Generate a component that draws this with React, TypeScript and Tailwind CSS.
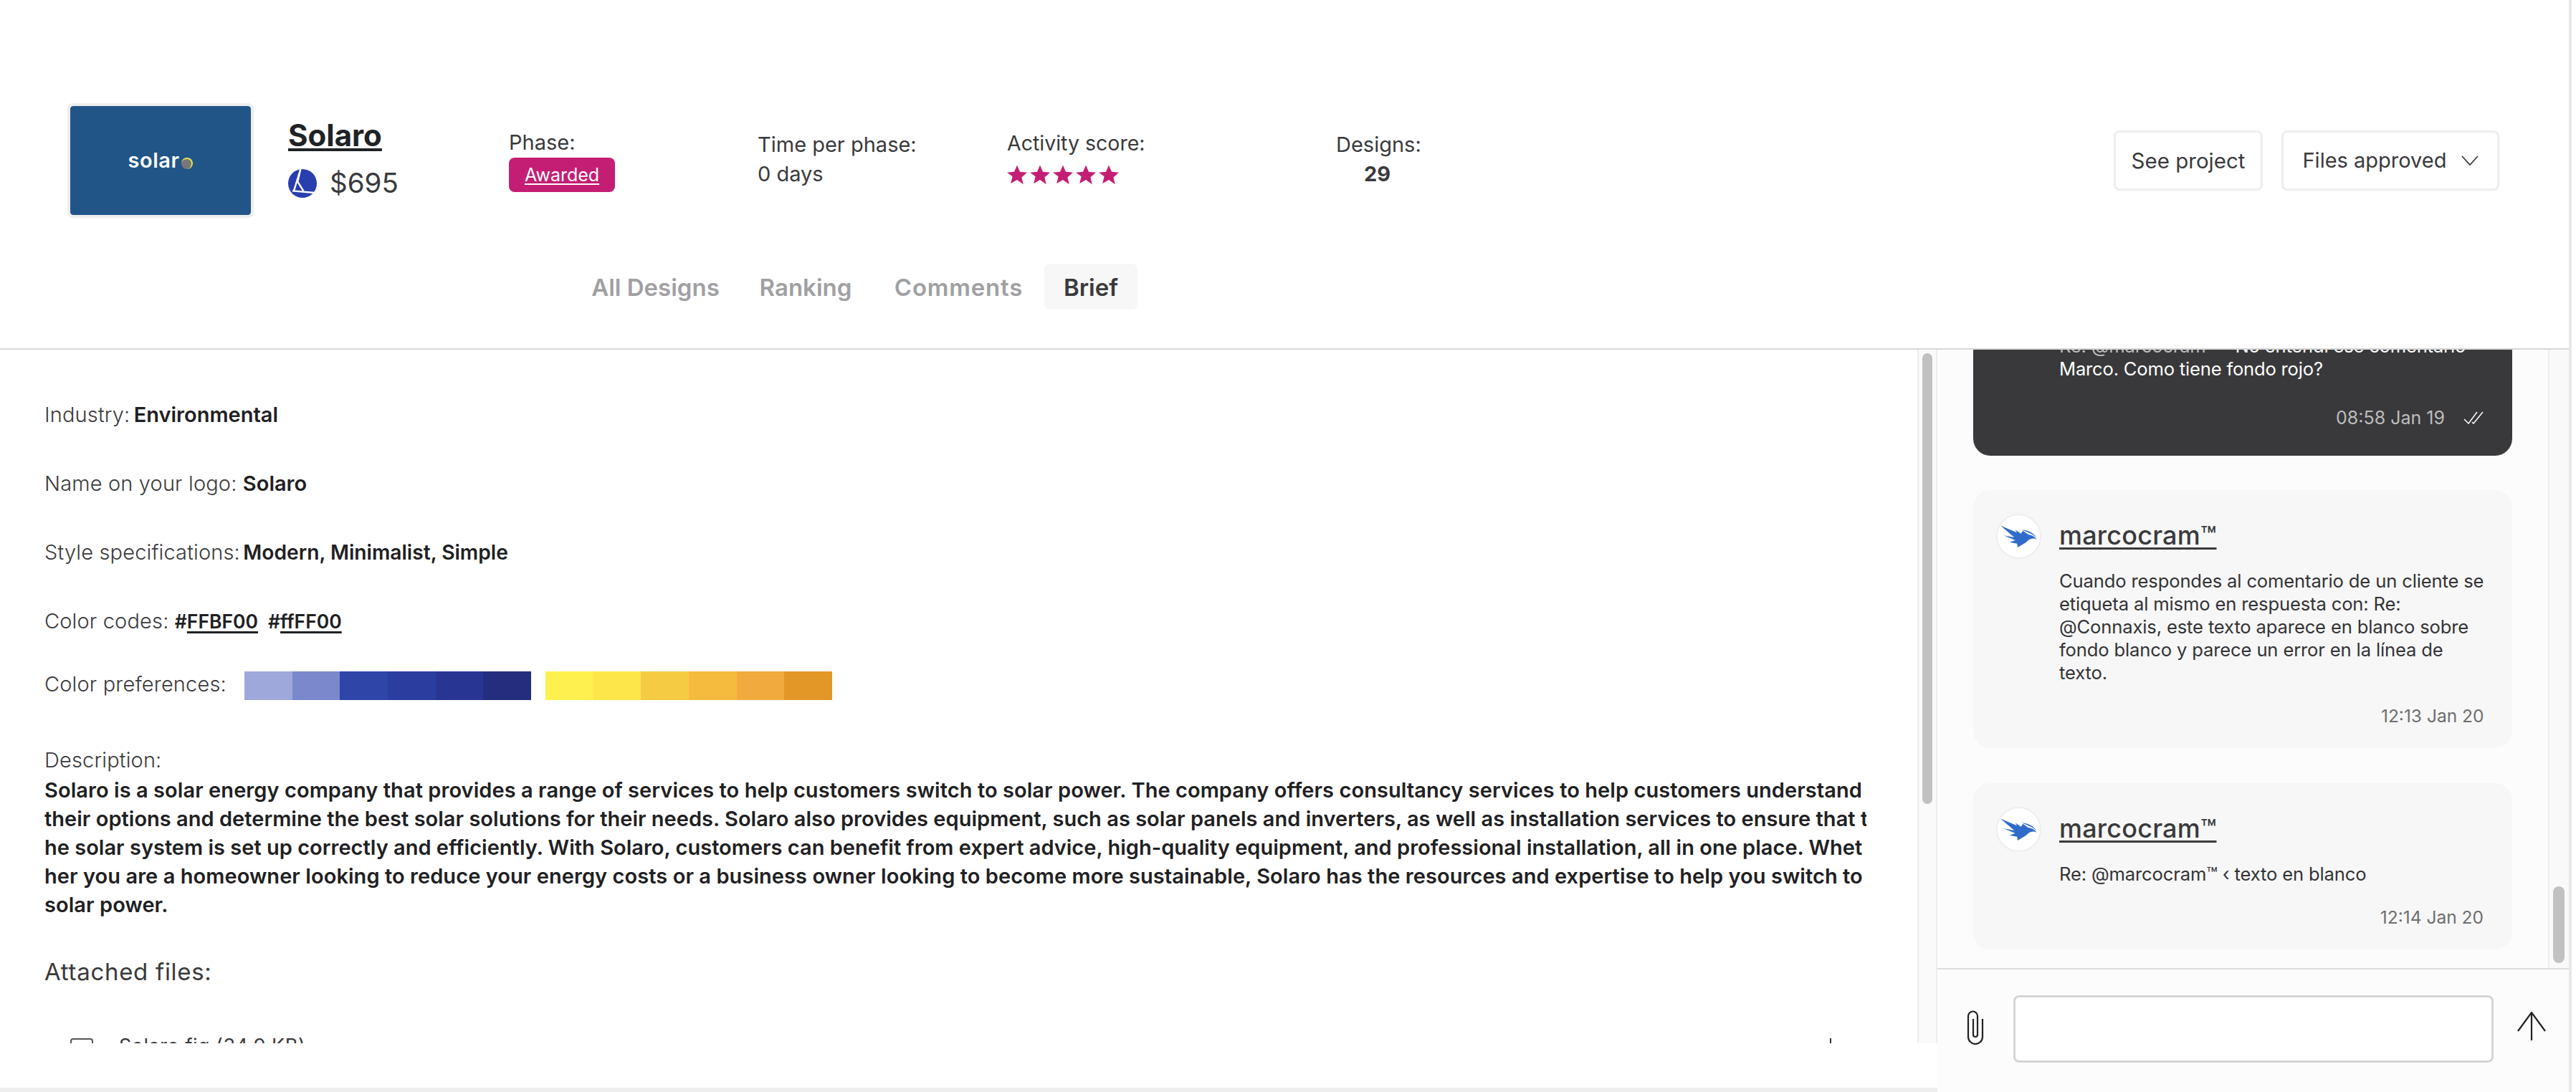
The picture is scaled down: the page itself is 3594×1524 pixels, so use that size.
import React from 'react';

const BLUES = ['#9fa8da', '#7b88cb', '#2f45a8', '#2b3ea0', '#283593', '#242d7e'];
const YELLOWS = ['#fef04e', '#fde64a', '#f6cb44', '#f5bb3e', '#f1aa3e', '#e39726'];

// lines are cut mid-word in the picture, so they are kept as they show
const DESCRIPTION = [
  { text: 'Solaro is a solar energy company that provides a range of services to help customers switch to solar power. The company offers consultancy services to help customers understand', fit: 'tracking-[0.06px]' },
  { text: 'their options and determine the best solar solutions for their needs. Solaro also provides equipment, such as solar panels and inverters, as well as installation services to ensure that t', fit: 'tracking-[0.02px]' },
  { text: 'he solar system is set up correctly and efficiently. With Solaro, customers can benefit from expert advice, high-quality equipment, and professional installation, all in one place. Whet', fit: 'tracking-[0.01px]' },
  { text: 'her you are a homeowner looking to reduce your energy costs or a business owner looking to become more sustainable, Solaro has the resources and expertise to help you switch to', fit: 'tracking-[0.06px]' },
  { text: 'solar power.', fit: 'tracking-[0.06px]' },
];

const TABS = [
  { label: 'All Designs', cell: 'w-[231px]' },
  { label: 'Ranking', cell: 'w-[188px]' },
  { label: 'Comments', cell: 'w-[239px] tracking-[0.8px]' },
];

const Star = () => (
  <svg width="28" height="28" viewBox="0 0 24 24" className="mr-[4px]">
    <path d="M12 0.5l3.4 7.9 8.6.8-6.5 5.7 2 8.5L12 18l-7.5 4.4 2-8.5L0 9.200l8.600-.8z" fill="#c41e74" />
  </svg>
);

const Coin = () => (
  <svg width="40" height="40" viewBox="66 267 120 120" className="shrink-0">
    <circle cx="126" cy="327" r="60" fill="#2a3fae" />
    <path d="M118 267L90 358M118 267L106 320L130 358M84 358L176 366" stroke="#fff" strokeWidth="7" fill="none" />
  </svg>
);

const Eagle = () => (
  <svg width="55" height="35" viewBox="60 35 165 105">
    <path
      d="M66 42L135 72L128 60L152 76L160 64L182 80C198 82 210 90 218 100C205 94 192 96 182 104C172 116 156 122 138 134L136 118L104 112L128 104L80 84L124 92Z"
      fill="#2f6bc9"
    />
    <path d="M155 60C185 62 205 75 216 92C200 78 180 70 155 60Z" fill="#2f6bc9" />
  </svg>
);

const Avatar = () => (
  <div className="w-[63px] h-[63px] shrink-0 rounded-full bg-white border-2 border-[#eeeeee] flex items-center justify-center">
    <Eagle />
  </div>
);

const ClientMessage = ({ lines, time }: { lines: string[]; time: string }) => (
  <div className="bg-[#f7f7f7] rounded-[24px] pl-[32px] pr-[40px] pt-[33px] pb-[29px] flex">
    <Avatar />
    <div className="ml-[25px] flex-1 mt-[8px]">
      <div className="text-[36px] leading-[44px] font-medium text-[#3a3a3c] underline underline-offset-[4px] decoration-[3px] tracking-[0.2px]">
        marcocram™
      </div>
      <div className="mt-[26px] text-[25.6px] leading-[32px] text-[#333335] whitespace-nowrap tracking-[-0.15px]">
        {lines.map(line => <div key={line}>{line}</div>)}
      </div>
      <div className="mt-[28px] text-[24.5px] leading-[32px] text-[#6e6e70] text-right">{time}</div>
    </div>
  </div>
);

export default function App() {
  return (
    <div className="w-[3594px] h-[1524px] overflow-hidden flex bg-white font-['Inter',sans-serif] text-[#3a3a3c]">
      <div className="w-[3584px] flex flex-col">
        <header className="h-[488px] shrink-0 border-b-2 border-[#d8d8d8] flex flex-col">
          <div className="h-[368px] shrink-0 flex items-start pl-[94px] pr-[97px] pt-[144px]">
            <div className="w-[260px] h-[160px] shrink-0 rounded-[8px] border-4 border-[#eeeeee] bg-[#225587] flex items-center justify-center bg-clip-padding">
              <span className="text-[29px] font-semibold text-white tracking-[0.5px]">solar</span>
              <span className="w-[16px] h-[16px] rounded-full bg-[#777777] ml-[3px] mt-[8px] border-t-2 border-r-2 border-[#e8e050]" />
            </div>
            <div className="ml-[48px] w-[308px] shrink-0 mt-[21px]">
              <div className="text-[42px] leading-[48px] font-bold text-[#1f2326] underline underline-offset-[3px] decoration-[4px]">
                Solaro
              </div>
              <div className="mt-[21px] flex items-center h-[44px] text-[38.500px]">
                <Coin />
                <span className="ml-[18px]">$695</span>
              </div>
            </div>
            <div className="w-[347px] shrink-0 mt-[35px] text-[29px] leading-[40px]">
              <div>Phase:</div>
              <div className="mt-[1px] w-[148px] h-[48px] rounded-[8px] bg-[#c41e74] text-white text-[25px] underline underline-offset-[3px] flex items-center justify-center">
                Awarded
              </div>
            </div>
            <div className="w-[348px] shrink-0 mt-[38px] text-[29px] leading-[40px]">
              <div>Time per phase:</div>
              <div className="mt-[1px]">0 days</div>
            </div>
            <div className="w-[459px] shrink-0 mt-[36px] text-[28.500px] leading-[40px]">
              <div>Activity score:</div>
              <div className="mt-[10px] flex">
                {[0, 1, 2, 3, 4].map(i => <Star key={i} />)}
              </div>
            </div>
            <div className="w-[115px] shrink-0 mt-[38px] text-[29px] leading-[40px] text-center">
              <div>Designs:</div>
              <div className="mt-[1px] font-bold">29</div>
            </div>
            <div className="ml-auto mt-[38px] flex gap-[26px] text-[29.500px]">
              <button className="w-[208px] h-[84px] rounded-[8px] border-[3px] border-[#eeeeee] flex items-center justify-center">
                See project
              </button>
              <button className="w-[304px] h-[84px] rounded-[8px] border-[3px] border-[#eeeeee] flex items-center justify-center text-[29px]">
                Files approved
                <svg width="24" height="14" viewBox="0 0 24 14" className="ml-[20px]">
                  <path d="M1 1l11 12L23 1" stroke="#3a3a3c" strokeWidth="1.800" fill="none" />
                </svg>
              </button>
            </div>
          </div>
          <nav className="flex pl-[799px] h-[64px] text-[33px] font-semibold text-[#a0a0a2]">
            {TABS.map(tab => (
              <div key={tab.label} className={`${tab.cell} pt-[3px] flex items-center justify-center`}>{tab.label}</div>
            ))}
            <div className="w-[130px] pt-[3px] rounded-[8px] bg-[#f7f7f7] text-[#3a3a3c] flex items-center justify-center">Brief</div>
          </nav>
        </header>

        <main className="flex-1 flex min-h-0">
          <div className="w-[2703px] shrink-0 flex flex-col">
            <div className="h-[968px] shrink-0 flex">
              <section className="w-[2675px] shrink-0 overflow-hidden pl-[62px] pt-[71px] text-[29px] leading-[40px] font-light tracking-[0.15px]">
                <p>Industry: <span className="-ml-[3px] font-semibold text-[#1f2123] tracking-normal">Environmental</span></p>
                <p className="mt-[56px]">Name on your logo: <span className="font-semibold text-[#1f2123] tracking-normal">Solaro</span></p>
                <p className="mt-[56px]">Style specifications: <span className="-ml-[4px] font-semibold text-[#1f2123] tracking-normal text-[28.200px]">Modern, Minimalist, Simple</span></p>
                <p className="mt-[56px]">
                  Color codes: <span className="font-semibold text-[#1f2123] text-[26.500px] tracking-normal">#<span className="underline underline-offset-[4px] decoration-[3px]">FFBF00</span></span>
                  <span className="font-semibold text-[#1f2123] text-[26.500px] tracking-normal ml-[14px]">#<span className="underline underline-offset-[4px] decoration-[3px]">ffFF00</span></span>
                </p>
                <div className="mt-[50px] flex items-start h-[40px]">
                  <span className="w-[279px] shrink-0 -mt-[2px]">Color preferences:</span>
                  <div className="flex">
                    {BLUES.map(c => <div key={c} className="w-[66.67px] h-[40px]" style={{ backgroundColor: c }} />)}
                  </div>
                  <div className="flex ml-[20px]">
                    {YELLOWS.map(c => <div key={c} className="w-[66.67px] h-[40px]" style={{ backgroundColor: c }} />)}
                  </div>
                </div>
                <p className="mt-[64px]">Description:</p>
                <div className="mt-[2px] w-[2542px] overflow-hidden whitespace-nowrap text-[29px] font-semibold text-[#1f2123]">
                  {DESCRIPTION.map(line => <div key={line.text} className={line.fit}>{line.text}</div>)}
                </div>
                <p className="mt-[49px] text-[33px] leading-[48px] font-normal tracking-[0.7px]">Attached files:</p>
                <div className="mt-[69px] flex items-start pl-[36px] pr-[120px] text-[27px] leading-[26px] font-normal tracking-[0.5px]">
                  <div className="w-[32px] h-[32px] rounded-[4px] border-2 border-[#555555]" />
                  <span className="ml-[36px] -mt-[2px]">Solaro.fig (34.9 KB)</span>
                  <div className="ml-auto w-[2px] h-[32px] bg-[#333333]" />
                </div>
              </section>
              <div className="flex-1 border-x-2 border-[#eeeeee] bg-[#fafafa] pt-[5px] px-[5px]">
                <div className="h-[629px] rounded-full bg-[#c1c1c1]" />
              </div>
            </div>
            <div className="flex-1 flex flex-col justify-end">
              <div className="h-[6px] bg-[#eeeeee]" />
            </div>
          </div>

          <aside className="flex-1 bg-[#fcfcfc] flex flex-col min-w-0">
            <div className="h-[865px] shrink-0 flex border-b-2 border-[#dddddd]">
              <div className="w-[852px] shrink-0 overflow-hidden flex flex-col justify-end gap-[48px] pl-[50px] pr-[50px] pb-[26px]">
                <div className="shrink-0 bg-[#39393b] rounded-[24px] pl-[120px] pr-[40px] pb-[37px] text-white text-[25.6px] leading-[32px] whitespace-nowrap tracking-[-0.2px]">
                  <div><span className="text-[#bdbdbd]">Re: @marcocram™</span> - No entendí ese comentario</div>
                  <div>Marco. Como tiene fondo rojo?</div>
                  <div className="mt-[36px] flex justify-end items-center text-[25px] text-[#bdbdbd] tracking-normal">
                    08:58 Jan 19
                    <svg width="28" height="18" viewBox="0 0 28 18" className="ml-[26px]">
                      <path d="M1 11l6 6L19 1M12 15l2 2L27 1" stroke="#fff" strokeWidth="1.500" fill="none" />
                    </svg>
                  </div>
                </div>
                <div className="shrink-0">
                  <ClientMessage
                    lines={[
                      'Cuando respondes al comentario de un cliente se',
                      'etiqueta al mismo en respuesta con: Re:',
                      '@Connaxis, este texto aparece en blanco sobre',
                      'fondo blanco y parece un error en la línea de',
                      'texto.',
                    ]}
                    time="12:13 Jan 20"
                  />
                </div>
                <div className="shrink-0 mt-[1px]">
                  <ClientMessage lines={['Re: @marcocram™ ‹ texto en blanco']} time="12:14 Jan 20" />
                </div>
              </div>
              <div className="flex-1 border-l-2 border-[#eeeeee] bg-[#f9f9f9] flex flex-col justify-end pl-[5px] pr-[6px] pb-[7px]">
                <div className="h-[107px] rounded-full bg-[#c1c1c1]" />
              </div>
            </div>
            <div className="flex-1 flex items-start pl-[41px] pt-[36px]">
              <svg width="24" height="48" viewBox="0 0 24 48" className="mt-[21px] shrink-0" fill="none">
                <path d="M22 12V37a10 10 0 0 1-20 0V8a6.500 6.500 0 0 1 13 0V34a3 3 0 0 1-6 0V12" stroke="#222224" strokeWidth="2.200" />
              </svg>
              <div className="ml-[41px] w-[670px] h-[94px] rounded-[8px] border-[3px] border-[#d5d5d5] bg-white shrink-0" />
              <svg width="40" height="40" viewBox="0 0 40 40" className="ml-[33px] mt-[23px] shrink-0" fill="none">
                <path d="M20 40V1M1 27L20 1l19 26" stroke="#222224" strokeWidth="2.200" />
              </svg>
            </div>
          </aside>
        </main>
      </div>
      <div className="flex-1 border-l-4 border-[#e8e8e8] bg-white" />
    </div>
  );
}
